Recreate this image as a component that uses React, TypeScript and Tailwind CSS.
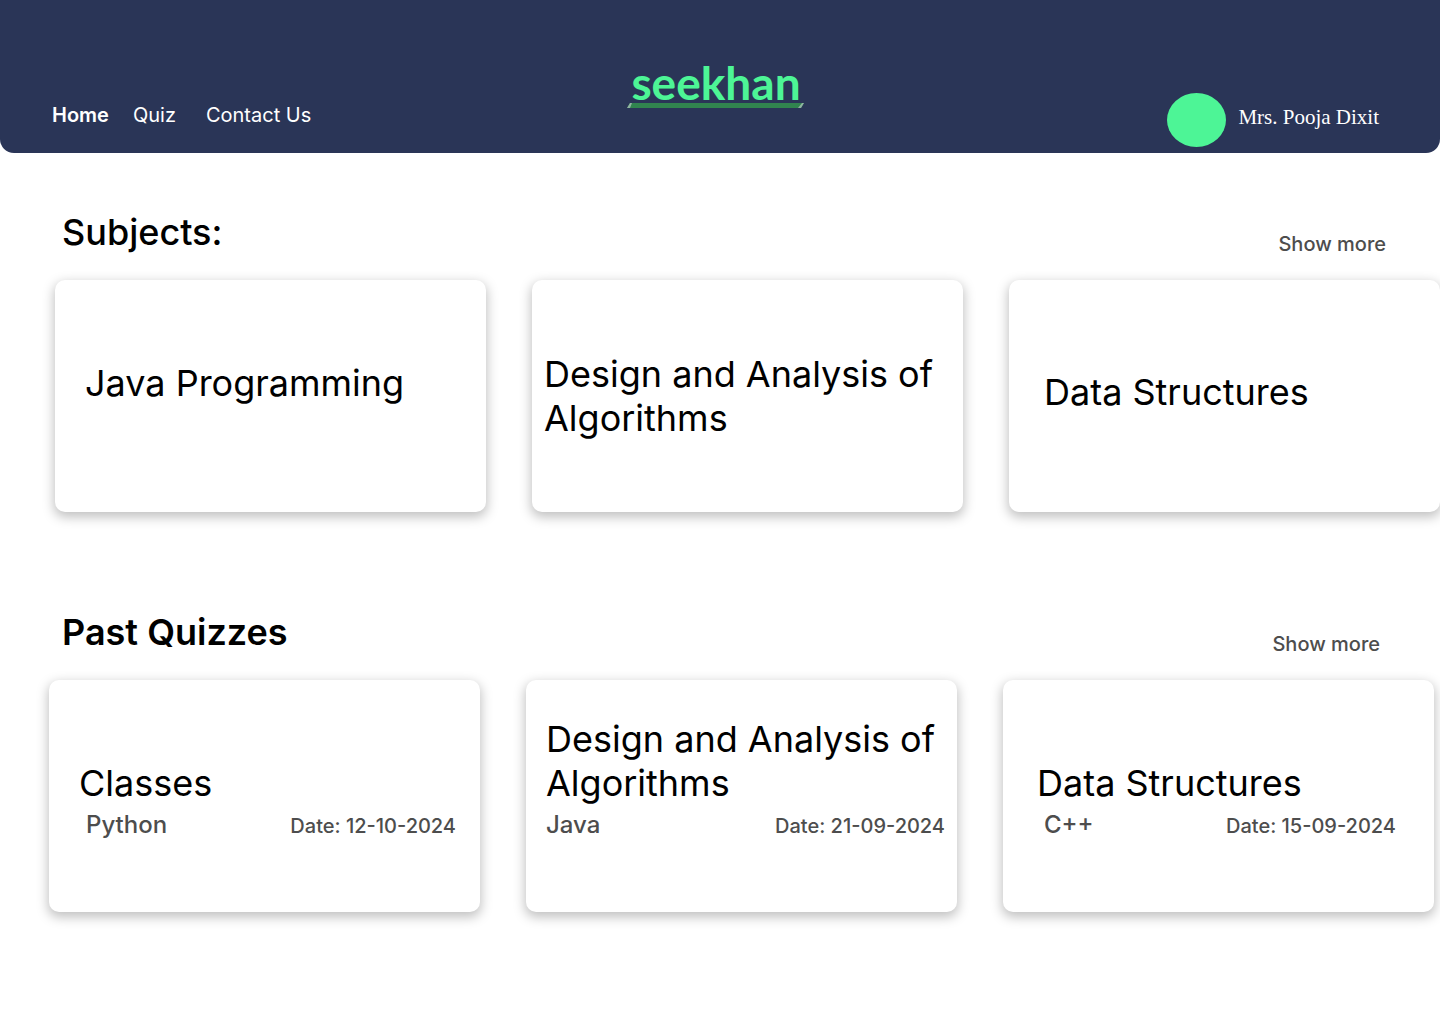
const subjects = [
  { title: "Java Programming", pad: "pl-[30px] pt-[81px]" },
  { title: "Design and Analysis of Algorithms", pad: "pl-3 pt-[72px]" },
  { title: "Data Structures", pad: "pl-[35px] pt-[90px]" },
];

const quizzes = [
  { title: "Classes", topic: "Python", date: "12-10-2024", titlePad: "pl-[30px]", rowPad: "pl-[37px] pr-6" },
  { title: "Design and Analysis of Algorithms", topic: "Java", date: "21-09-2024", titlePad: "pl-5", rowPad: "pl-5 pr-3" },
  { title: "Data Structures", topic: "C++", date: "15-09-2024", titlePad: "pl-[34px]", rowPad: "pl-[41px] pr-[38px]" },
];

const card =
  "min-h-[232px] rounded-[10px] bg-white shadow-[0_4px_12px_1px_rgba(0,0,0,0.25)]";

function Logo() {
  return (
    <a href="#" aria-label="seekhan" className="flex w-[178px] flex-col items-center">
      <span className="font-[Lato] text-[46px] leading-[38px] font-bold text-[#4df596]">seekhan</span>
      <svg viewBox="0 0 178 6" className="h-[6px] w-full" aria-hidden="true">
        <path d="M3 1H177L174 6H0Z" fill="#31844f" />
        <path d="M3 1H5L3 6H0ZM175 1H177L174 6H171Z" fill="#8fb3a0" />
      </svg>
    </a>
  );
}

export default function App() {
  return (
    <div className="min-h-screen overflow-x-hidden bg-white font-[Inter,sans-serif] text-black">
      <header className="grid min-h-[153px] grid-cols-[1fr_auto_1fr] items-end rounded-b-[14px] bg-[#2a3557] text-white">
        <nav className="flex pb-[26px] pl-[52px] text-[20px] leading-6">
          <a href="#" className="mr-6 font-semibold">Home</a>
          <a href="#" className="mr-[30px]">Quiz</a>
          <a href="#">Contact Us</a>
        </nav>
        <div className="pr-2 pb-[45px]">
          <Logo />
        </div>
        <div className="flex items-center justify-end gap-3 pr-[61px] pb-[6px]">
          <span className="h-[54px] w-[59px] rounded-[50%] bg-[#4df596]" />
          <span className="pb-[6px] font-['Liberation_Serif',serif] text-[21px] leading-7">Mrs. Pooja Dixit</span>
        </div>
      </header>

      <main>
        <section className="pt-[57px]">
          <div className="flex items-end justify-between pr-[54px] pl-[62px]">
            <h1 className="pb-[2px] text-[36px] leading-[44px] font-medium">Subjects:</h1>
            <a href="#" className="text-[20px] leading-6 font-medium text-[#4d4d4d]">Show more</a>
          </div>
          <div className="mt-6 grid grid-cols-3 gap-[46px] pl-[55px]">
            {subjects.map((s) => (
              <article key={s.title} className={`${card} ${s.pad}`}>
                <h2 className="text-[36px] leading-[44px]">{s.title}</h2>
              </article>
            ))}
          </div>
        </section>

        <section className="pt-[98px] pb-16">
          <div className="flex items-end justify-between pr-[60px] pl-[62px]">
            <h1 className="pb-[2px] text-[36px] leading-[44px] font-semibold">Past Quizzes</h1>
            <a href="#" className="text-[20px] leading-6 font-medium text-[#4d4d4d]">Show more</a>
          </div>
          <div className="mt-6 grid grid-cols-3 gap-[46px] pr-[6px] pl-[49px]">
            {quizzes.map((q) => (
              <article key={q.date} className={`${card} flex flex-col justify-end pb-[72px]`}>
                <h2 className={`text-[36px] leading-[44px] ${q.titlePad}`}>{q.title}</h2>
                <div className={`mt-[5px] flex items-baseline justify-between text-[#4d4d4d] ${q.rowPad}`}>
                  <span className="text-[24px] leading-[30px] font-medium">{q.topic}</span>
                  <span className="text-[20px] leading-6 font-medium">Date: {q.date}</span>
                </div>
              </article>
            ))}
          </div>
        </section>
      </main>
    </div>
  );
}
